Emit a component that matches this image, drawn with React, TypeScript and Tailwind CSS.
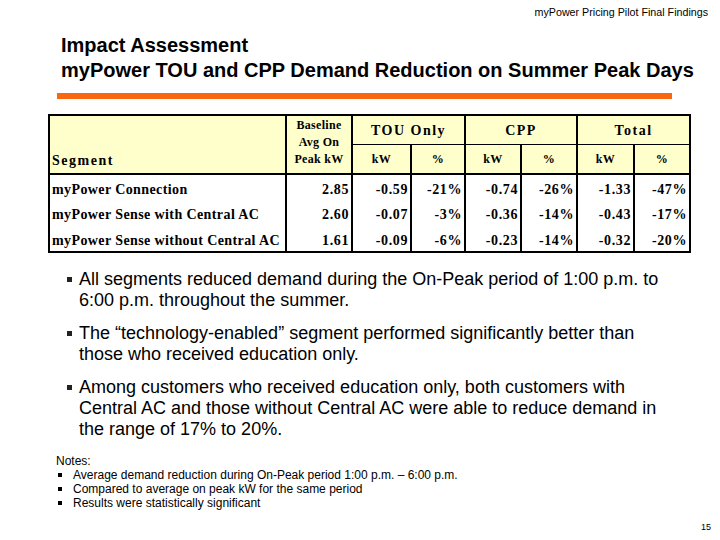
const rows = [
  { name: 'myPower Connection', base: '2.85', touKw: '-0.59', touPct: '-21%', cppKw: '-0.74', cppPct: '-26%', totKw: '-1.33', totPct: '-47%' },
  { name: 'myPower Sense with Central AC', base: '2.60', touKw: '-0.07', touPct: '-3%', cppKw: '-0.36', cppPct: '-14%', totKw: '-0.43', totPct: '-17%' },
  { name: 'myPower Sense without Central AC', base: '1.61', touKw: '-0.09', touPct: '-6%', cppKw: '-0.23', cppPct: '-14%', totKw: '-0.32', totPct: '-20%' },
];

const bullets = [
  'All segments reduced demand during the On-Peak period of 1:00 p.m. to 6:00 p.m. throughout the summer.',
  'The \u201ctechnology-enabled\u201d segment performed significantly better than those who received education only.',
  'Among customers who received education only, both customers with Central AC and those without Central AC were able to reduce demand in the range of 17% to 20%.',
];

const notes = [
  'Average demand reduction during On-Peak period 1:00 p.m. \u2013 6:00 p.m.',
  'Compared to average on peak kW for the same period',
  'Results were statistically significant',
];

export default function App() {
  const num = 'border-x-2 border-black text-right pr-[2px] pt-[4px] tracking-[0.6px]';
  return (
    <div className="w-[720px] h-[540px] bg-white flex flex-col text-black font-['Liberation_Sans',Arial,sans-serif]">
      <div className="text-right text-[10.7px] leading-[12px] pt-[6px] pr-[12px]">myPower Pricing Pilot Final Findings</div>

      <div className="pl-[61px] mt-[15px] font-bold text-[20px] leading-[25px]">
        <div>Impact Assessment</div>
        <div>myPower TOU and CPP Demand Reduction on Summer Peak Days</div>
      </div>

      <div className="ml-[57px] mt-[10px] w-[615px] h-[6px] bg-[#f7680f]" />

      <table className="ml-[48px] mt-[15px] w-[641px] table-fixed border-collapse border-2 border-black font-['Liberation_Serif','Times_New_Roman',serif] font-bold">
        <colgroup>
          <col className="w-[237px]" />
          <col className="w-[66px]" />
          <col className="w-[59px]" />
          <col className="w-[54px]" />
          <col className="w-[56px]" />
          <col className="w-[56px]" />
          <col className="w-[57px]" />
          <col className="w-[56px]" />
        </colgroup>
        <thead className="bg-[#ffffcc]">
          <tr className="h-[29px]">
            <th rowSpan={2} className="border-2 border-black align-bottom text-left pl-[2px] pb-[4px] text-[14px] leading-[16px] tracking-[1.5px]">Segment</th>
            <th rowSpan={2} className="border-2 border-black align-top pt-[1px] text-[12px] leading-[17px] tracking-[0.3px]">Baseline<br />Avg On<br />Peak kW</th>
            <th colSpan={2} className="border-x-2 border-b border-black text-[14px] leading-[16px] tracking-[1.5px] pt-[3px]">TOU Only</th>
            <th colSpan={2} className="border-x-2 border-b border-black text-[14px] leading-[16px] tracking-[1.5px] pt-[3px]">CPP</th>
            <th colSpan={2} className="border-x-2 border-b border-black text-[14px] leading-[16px] tracking-[1.5px] pt-[3px]">Total</th>
          </tr>
          <tr className="h-[30px] text-[12px] leading-[14px] border-b-2 border-black">
            {['kW', '%', 'kW', '%', 'kW', '%'].map((h, i) => (
              <th key={i} className="border-x-2 border-black tracking-[0.5px]">{h}</th>
            ))}
          </tr>
        </thead>
        <tbody className="text-[14px] leading-[16px]">
          {rows.map((r) => (
            <tr key={r.name} className="h-[26px]">
              <td className="border-x-2 border-black pl-[2px] pt-[4px] tracking-[0.4px] whitespace-nowrap">{r.name}</td>
              <td className={num}>{r.base}</td>
              <td className={num}>{r.touKw}</td>
              <td className={num}>{r.touPct}</td>
              <td className={num}>{r.cppKw}</td>
              <td className={num}>{r.cppPct}</td>
              <td className={num}>{r.totKw}</td>
              <td className={num}>{r.totPct}</td>
            </tr>
          ))}
        </tbody>
      </table>

      <div className="mt-[16px] flex flex-col gap-[12px]">
        {bullets.map((b, i) => (
          <div key={i} className="flex pl-[67px]">
            <div className="w-[5px] h-[5px] bg-[#222] mt-[8px] shrink-0" />
            <div className="ml-[7px] w-[592px] text-[18px] leading-[21px]">{b}</div>
          </div>
        ))}
      </div>

      <div className="mt-[14px] pl-[56px] text-[12px] leading-[14px]">
        <div>Notes:</div>
        {notes.map((n, i) => (
          <div key={i} className="flex items-center">
            <div className="ml-[2px] w-[4px] h-[4px] bg-black shrink-0" />
            <div className="ml-[11px]">{n}</div>
          </div>
        ))}
      </div>

      <div className="mt-auto self-end pr-[9px] pb-[8px] text-[9px] leading-[10px]">15</div>
    </div>
  );
}
